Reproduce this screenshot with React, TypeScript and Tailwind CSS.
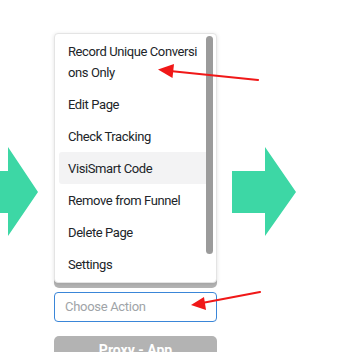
import React from 'react';

const menuItems = ['Edit Page', 'Check Tracking', 'VisiSmart Code', 'Remove from Funnel', 'Delete Page', 'Settings'];

const GreenArrow = ({ className }: { className?: string }) => (
  <svg className={className} viewBox="0 0 64 89" width="64" height="89">
    <polygon points="0,24 33,24 33,0 64,45 33,89 33,66 0,66" fill="#3dd7a5" />
  </svg>
);

export default function App() {
  return (
    <div
      className="relative w-[353px] h-[352px] overflow-hidden bg-white"
      style={{ fontFamily: 'Roboto, "Noto Sans", sans-serif' }}
    >
      <div className="flex items-start">
        {/* left arrow, shaft runs off the edge */}
        <div className="w-[38px] mt-[147px] overflow-hidden shrink-0">
          <svg viewBox="0 0 38 89" width="38" height="89">
            <polygon points="0,24 8,24 8,0 38,45 8,89 8,66 0,66" fill="#3dd7a5" />
          </svg>
        </div>

        {/* action column */}
        <div className="relative ml-[16px] w-[163px] shrink-0 flex flex-col">
          <div className="mt-[40px] h-[248px] rounded-[5px] bg-[#b4b4b4]" />
          <div className="mt-[4px] h-[30px] rounded-[4px] border border-[#3a86d8] bg-white px-[10px] flex items-center text-[13px] tracking-[-0.3px] text-[#a0a4a8]">
            Choose Action
          </div>
          <div className="mt-[14px] h-[30px] rounded-[5px] bg-[#b3b3b3] flex justify-center pt-[4px] text-[14px] font-bold text-white">
            Proxy - App
          </div>

          {/* dropdown menu */}
          <div className="absolute left-0 top-[33px] w-[163px] h-[250px] rounded-[4px] border border-[#e4e4e4] bg-white shadow-[0_1px_4px_rgba(0,0,0,0.12)] pt-[1px] px-[4px] text-[13px] tracking-[-0.4px] text-[#212529]">
            <div className="px-[9px] py-[5.5px] leading-[21px] whitespace-nowrap">
              Record Unique Conversi
              <br />
              ons Only
            </div>
            {menuItems.map((item) => (
              <div
                key={item}
                className={
                  item === 'VisiSmart Code'
                    ? 'px-[9px] py-[5.5px] leading-[21px] rounded-[3px] bg-[#f3f3f4]'
                    : 'px-[9px] py-[5.5px] leading-[21px]'
                }
              >
                {item}
              </div>
            ))}
            <div className="absolute right-[3px] top-[2px] w-[7px] h-[218px] rounded-full bg-[#9b9b9b]" />
          </div>
        </div>

        <GreenArrow className="ml-[15px] mt-[147px] shrink-0" />
      </div>

      {/* red annotation arrows */}
      <svg className="absolute inset-0 pointer-events-none" width="353" height="352" viewBox="0 0 353 352">
        <line x1="258" y1="80" x2="170" y2="71" stroke="#f01818" strokeWidth="2.2" strokeLinecap="round" />
        <polygon points="158,69.5 174,64 172.5,78" fill="#f01818" />
        <line x1="260" y1="292" x2="202" y2="303" stroke="#f01818" strokeWidth="2.2" strokeLinecap="round" />
        <polygon points="191,305 204,297 206,310" fill="#f01818" />
      </svg>
    </div>
  );
}
